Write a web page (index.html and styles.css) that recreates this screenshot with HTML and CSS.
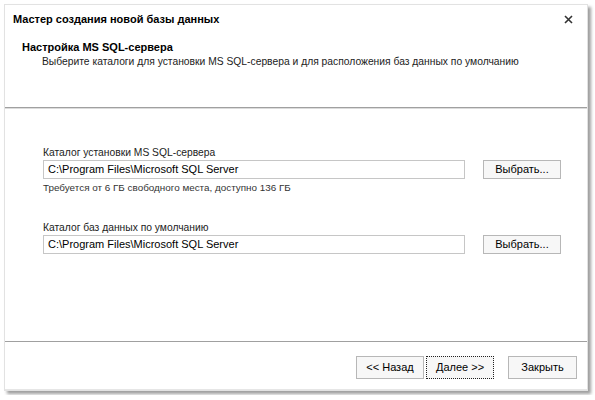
FILE: index.html
```html
<!DOCTYPE html>
<html lang="ru">
<head>
<meta charset="utf-8">
<link rel="stylesheet" href="styles.css">
</head>
<body>
<div class="window">
  <div class="titlebar">
    <span class="title">Мастер создания новой базы данных</span>
    <svg class="close" width="9" height="9" viewBox="0 0 9 9"><path d="M1 1L8 8M8 1L1 8" stroke="#333" stroke-width="1.6" fill="none"/></svg>
  </div>
  <div class="header">
    <div class="heading">Настройка MS SQL-сервера</div>
    <div class="subtitle">Выберите каталоги для установки MS SQL-сервера и для расположения баз данных по умолчанию</div>
  </div>
  <div class="content">
    <div class="field">
      <div class="label">Каталог установки MS SQL-сервера</div>
      <div class="row">
        <div class="input">C:\Program Files\Microsoft SQL Server</div>
        <div class="btn browse">Выбрать...</div>
      </div>
      <div class="hint">Требуется от 6 ГБ свободного места, доступно 136 ГБ</div>
    </div>
    <div class="field second">
      <div class="label">Каталог баз данных по умолчанию</div>
      <div class="row">
        <div class="input">C:\Program Files\Microsoft SQL Server</div>
        <div class="btn browse">Выбрать...</div>
      </div>
    </div>
  </div>
  <div class="footer">
    <div class="btn nav back">&lt;&lt; Назад</div>
    <div class="btn nav next">Далее &gt;&gt;</div>
    <div class="btn nav closebtn">Закрыть</div>
  </div>
</div>
</body>
</html>
```
FILE: styles.css
```css
html, body {
  margin: 0;
  padding: 0;
  background: #ffffff;
}
body {
  padding: 4px;
  font-family: "Liberation Sans", Arial, sans-serif;
  font-size: 10.3px;
  color: #1e1e1e;
}
.window {
  width: 584px;
  height: 387px;
  box-sizing: border-box;
  background: #fff;
  border: 1px solid #e2e2e2;
  box-shadow: 3px 3px 3px rgba(0,0,0,0.38);
  display: flex;
  flex-direction: column;
}
.titlebar {
  display: flex;
  justify-content: space-between;
  align-items: center;
  padding: 7px 14px 0 8px;
  height: 14px;
}
.title {
  font-weight: bold;
  font-size: 11px;
  color: #000;
  line-height: 14px;
}
.close {
  display: block;
}
.header {
  padding: 13px 0 0 17px;
  height: 68px;
  border-bottom: 1px solid #a0a0a0;
  box-shadow: 0 1px 0 #dcdcdc;
}
.heading {
  font-weight: bold;
  font-size: 11px;
  line-height: 16px;
  color: #000;
}
.subtitle {
  padding-left: 20px;
  line-height: 14px;
  color: #222;
}
.content {
  flex: 1;
  padding: 38px 26px 0 38px;
}
.label {
  line-height: 14px;
  color: #222;
}
.row {
  display: flex;
  gap: 18px;
}
.input {
  width: 422px;
  height: 19px;
  box-sizing: border-box;
  border: 1px solid #c6c6c6;
  padding-left: 4px;
  font-size: 11px;
  line-height: 17px;
  color: #000;
}
.btn {
  box-sizing: border-box;
  border: 1px solid #b7b7b7;
  background: #f7f7f7;
  text-align: center;
  color: #000;
  font-size: 11px;
}
.browse {
  width: 78px;
  height: 19px;
  line-height: 17px;
}
.hint {
  font-size: 9.9px;
  line-height: 12px;
  margin-top: 3px;
  color: #333;
}
.second {
  margin-top: 27px;
}
.footer {
  border-top: 1px solid #a0a0a0;
  box-shadow: 0 -1px 0 #e6e6e6 inset;
  height: 49px;
  box-sizing: border-box;
  display: flex;
  justify-content: flex-end;
  align-items: flex-start;
  padding: 14px 10px 0 0;
}
.nav {
  height: 23px;
  line-height: 21px;
}
.back {
  width: 68px;
}
.next {
  width: 68px;
  margin-left: 2px;
  border: 1px dotted #222;
}
.closebtn {
  width: 69px;
  margin-left: 14px;
}
```
